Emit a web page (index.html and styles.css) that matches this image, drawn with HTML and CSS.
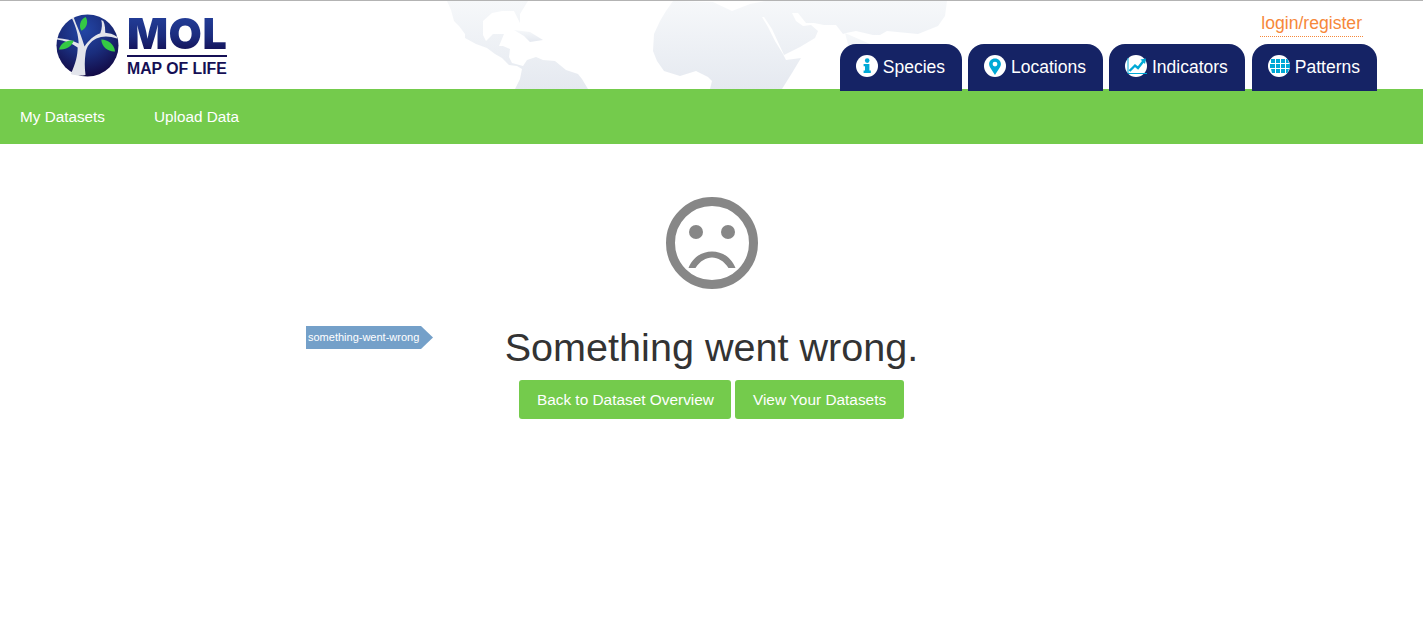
FILE: index.html
```html
<!DOCTYPE html>
<html lang="en">
<head>
    <meta charset="UTF-8">
    <title>Map of Life | Datasets</title>
    <link rel="stylesheet" href="styles.css">
</head>
<body>
    <header class="header">
        <!-- faint world map behind the header -->
        <svg class="world" width="520" height="88" viewBox="0 0 520 88" aria-hidden="true">
            <defs>
                <linearGradient id="land" x1="0" y1="0" x2="0" y2="1">
                    <stop offset="0" stop-color="#f6f8fa"/>
                    <stop offset="1" stop-color="#e5e9f0"/>
                </linearGradient>
            </defs>
            <path fill="url(#land)" d="M7 0 L11 9 L14 20 L19 25 L25 33 L25 37 L36 43 L47 47 L55 53 L62 57 L69 64 L77 65 L82 68 L80 78 L75 88 L148 88 L142 78 L138 73 L126 69 L115 60 L103 59 L96 56 L87 59 L83 65 L72 62 L69 56 L70 48 L63 45 L59 45 L64 33 L53 33 L46 40 L43 34 L43 20 L52 12 L62 10 L74 10 L80 22 L80 13 L88 0 Z"/>
            <path fill="url(#land)" d="M74 29 L90 31 L103 39 L90 41 L84 35 Z"/>
            <path fill="url(#land)" d="M233 0 L226 10 L220 20 L214 33 L213 50 L217 60 L224 70 L240 75 L256 70 L268 76 L272 80 L270 88 L342 88 L352 72 L361 57 L346 59 L343 53 L335 40 L328 26 L322 16 L324 16 L332 28 L344 54 L360 46 L375 37 L378 30 L371 24 L363 25 L356 20 L352 12 L358 12 L366 22 L374 22 L384 24 L396 24 L403 33 L406 32 L416 30 L433 34 L440 34 L447 30 L478 33 L498 25 L505 15 L507 0 L325 0 L310 3 L292 10 L273 1 Z"/>
            <path fill="url(#land)" d="M405 32 L420 88 L440 88 L446 50 Z"/>
        </svg>

        <a href="#" class="logo" aria-label="Map of Life home">
            <svg class="logo-mark" width="63" height="63" viewBox="0 0 64 64">
                <defs>
                    <radialGradient id="globe" cx="45%" cy="25%" r="80%">
                        <stop offset="0" stop-color="#2346a6"/>
                        <stop offset="0.5" stop-color="#1a2d7c"/>
                        <stop offset="1" stop-color="#12063f"/>
                    </radialGradient>
                </defs>
                <circle cx="32" cy="32" r="31.5" fill="url(#globe)"/>
                <path fill="#e2e4eb" d="M15 61 C20 50 22 42 22 34 C16 30 8 27 1 26 L1 24.500 C9 25 17 27 23 30 C23 22 20 12 16 4 L18 3.500 C21 12 25 20 27 27 L29 33 C33 27 38 22 45 19.500 C47 14 47 10 46 6 L48 7 C50 11 50 16 50 19 C54 19.500 58 20 62 23 L62 25 C54 22 47 22 41 25 C35 28 31 33 30 40 C29 47 29 54 30 62 C25 63 19 62.500 15 61 Z"/>
                <path fill="#35c944" d="M30 3 C33 7 32 13.500 26 17 C23 13 24 6 30 3 Z"/>
                <path fill="#35c944" d="M3 36 C5 29 11 26.500 18 27 C16 33 10 37 3 36 Z"/>
                <path fill="#35c944" d="M46 26 C53 26 59 31 60 38 C53 38.500 46.500 34 46 26 Z"/>
            </svg>
            <span class="logo-text">
                <span class="logo-mol">MOL</span>
                <span class="logo-name">MAP OF LIFE</span>
            </span>
        </a>

        <div class="header-right">
            <a href="#" class="login">login/register</a>
            <nav class="tabs">
                <a href="#" class="tab">
                    <svg class="tab-icon" viewBox="0 0 22 22">
                        <circle cx="11" cy="11" r="11" fill="#fff"/>
                        <circle cx="11.2" cy="5.6" r="2.3" fill="#00a9d6"/>
                        <path fill="#00a9d6" d="M7.6 9 H13.4 V15.6 H14.8 V18 H7.6 V15.6 H9 V11.3 H7.6 Z"/>
                    </svg>
                    Species
                </a>
                <a href="#" class="tab">
                    <svg class="tab-icon" viewBox="0 0 22 22">
                        <circle cx="11" cy="11" r="11" fill="#fff"/>
                        <path fill="#00a9d6" fill-rule="evenodd" d="M11 3.4 C14.6 3.4 16.9 6 16.9 9 C16.9 12.4 13.4 15.6 11 20 C8.6 15.6 5.1 12.4 5.1 9 C5.1 6 7.4 3.4 11 3.4 Z M11 6.7 A2.4 2.4 0 1 0 11 11.5 A2.4 2.4 0 1 0 11 6.7 Z"/>
                    </svg>
                    Locations
                </a>
                <a href="#" class="tab">
                    <svg class="tab-icon" viewBox="0 0 22 22">
                        <circle cx="11" cy="11" r="11" fill="#fff"/>
                        <path fill="none" stroke="#00a9d6" stroke-width="1" d="M3 3 V18.500 H22"/>
                        <path fill="none" stroke="#00a9d6" stroke-width="2.400" d="M4.500 16 L10 10.500 L13 13 L18.500 6"/>
                        <path fill="#00a9d6" d="M15.500 4.500 L21 3.500 L20 9 Z"/>
                    </svg>
                    Indicators
                </a>
                <a href="#" class="tab">
                    <svg class="tab-icon" viewBox="0 0 22 22">
                        <circle cx="11" cy="11" r="11" fill="#fff"/>
                        <path fill="#00a9d6" d="M3 4 H7 V8 H3 Z M8 4 H12 V8 H8 Z M13 4 H17 V8 H13 Z M18 4 H19.500 L21 8 H18 Z M2 9 H7 V13 H2 Z M8 9 H12 V13 H8 Z M13 9 H17 V13 H13 Z M18 9 H22 V13 H18 Z M3 14 H7 V18 H4 Z M8 14 H12 V18 H8 Z M13 14 H17 V18 H13 Z M18 14 H21 L19.500 18 H18 Z"/>
                    </svg>
                    Patterns
                </a>
            </nav>
        </div>
    </header>

    <nav class="subnav">
        <a href="#">My Datasets</a>
        <a href="#">Upload Data</a>
    </nav>

    <main class="error-page">
        <svg class="sad-face" width="92" height="92" viewBox="0 0 92 92">
            <circle cx="46" cy="46" r="41.5" fill="none" stroke="#878787" stroke-width="9"/>
            <circle cx="30" cy="35" r="7" fill="#878787"/>
            <circle cx="62" cy="35" r="7" fill="#878787"/>
            <path fill="#878787" d="M22.500 71 C27 60 36 54.500 46 54.500 C56 54.500 65 60 69.500 71 L62.500 71 C58 64 52 60.500 46 60.500 C40 60.500 34 64 29.500 71 Z"/>
        </svg>
        <div class="error-tag">something-went-wrong</div>
        <h1>Something went wrong.</h1>
        <div class="actions">
            <a href="#" class="button">Back to Dataset Overview</a>
            <a href="#" class="button">View Your Datasets</a>
        </div>
    </main>
</body>
</html>
```

FILE: styles.css
```css
* {
    margin: 0;
    padding: 0;
    box-sizing: border-box;
}

:root {
    --green: #74cb4c;
    --navy: #152365;
    --orange: #f6883a;
}

body {
    font-family: "Liberation Sans", Arial, sans-serif;
    background: #fff;
    color: #333;
}

a {
    text-decoration: none;
}

/* Header */
.header {
    position: relative;
    height: 89px;
    border-top: 1px solid #b3b3b3;
    display: flex;
    justify-content: space-between;
    padding: 0 46px 0 56px;
}

.world {
    position: absolute;
    left: 440px;
    top: 0;
}

.logo {
    position: relative;
    display: flex;
    align-items: flex-start;
    gap: 8px;
    padding-top: 12px;
}

.logo-mark {
    margin-top: 1px;
}

.logo-text {
    display: flex;
    flex-direction: column;
    width: 100px;
}

.logo-mol {
    font-family: Inter, "Liberation Sans", sans-serif;
    font-size: 43px;
    font-weight: 900;
    line-height: 40px;
    letter-spacing: 0.5px;
    height: 44px;
    border-bottom: 2.500px solid #150f55;
    background: linear-gradient(180deg, #24409c 0%, #1b2c7e 55%, #120a4f 100%);
    -webkit-background-clip: text;
    background-clip: text;
    color: transparent;
}

.logo-name {
    font-size: 15.8px;
    font-weight: bold;
    line-height: 24px;
    white-space: nowrap;
    color: #150f55;
}

.header-right {
    position: relative;
    display: flex;
    flex-direction: column;
    align-items: flex-end;
}

.login {
    flex-shrink: 0;
    margin: 11px 14px 7px 0;
    font-size: 17.6px;
    line-height: 22px;
    color: var(--orange);
    border-bottom: 1px dotted var(--orange);
    height: 25px;
    padding: 0 1px;
}

/* Tabs hang 2px over the green bar */
.tabs {
    flex-shrink: 0;
    display: flex;
    gap: 6px;
    height: 47px;
}

.tab {
    display: flex;
    align-items: center;
    gap: 5px;
    height: 47px;
    padding: 0 17px 0 16px;
    background: var(--navy);
    border-radius: 16px 16px 0 0;
    color: #fff;
    font-size: 17.5px;
}

.tab:last-child {
    margin-left: 1px;
}

.tab-icon {
    width: 22px;
    height: 22px;
    margin-bottom: 3px;
}

/* Green bar */
.subnav {
    display: flex;
    align-items: center;
    gap: 49px;
    height: 55px;
    padding-left: 20px;
    background: var(--green);
}

.subnav a {
    color: #fff;
    font-size: 15.3px;
}

/* Error message */
.error-page {
    position: relative;
    display: flex;
    flex-direction: column;
    align-items: center;
    padding-top: 53px;
}

.error-tag {
    position: absolute;
    left: 306px;
    top: 182px;
    width: 127px;
    height: 23px;
    padding-left: 2px;
    background: #74a0c9;
    clip-path: polygon(0 0, 115px 0, 100% 50%, 115px 100%, 0 100%);
    color: #fff;
    font-size: 11px;
    line-height: 23px;
}

h1 {
    margin-top: 31px;
    font-size: 39.6px;
    font-weight: normal;
    line-height: 54px;
    color: #333;
}

.actions {
    display: flex;
    gap: 4px;
    margin-top: 6px;
}

.button {
    height: 39px;
    padding: 0 17.500px;
    border-radius: 3px;
    background: var(--green);
    color: #fff;
    font-size: 15.4px;
    line-height: 39px;
}
```
